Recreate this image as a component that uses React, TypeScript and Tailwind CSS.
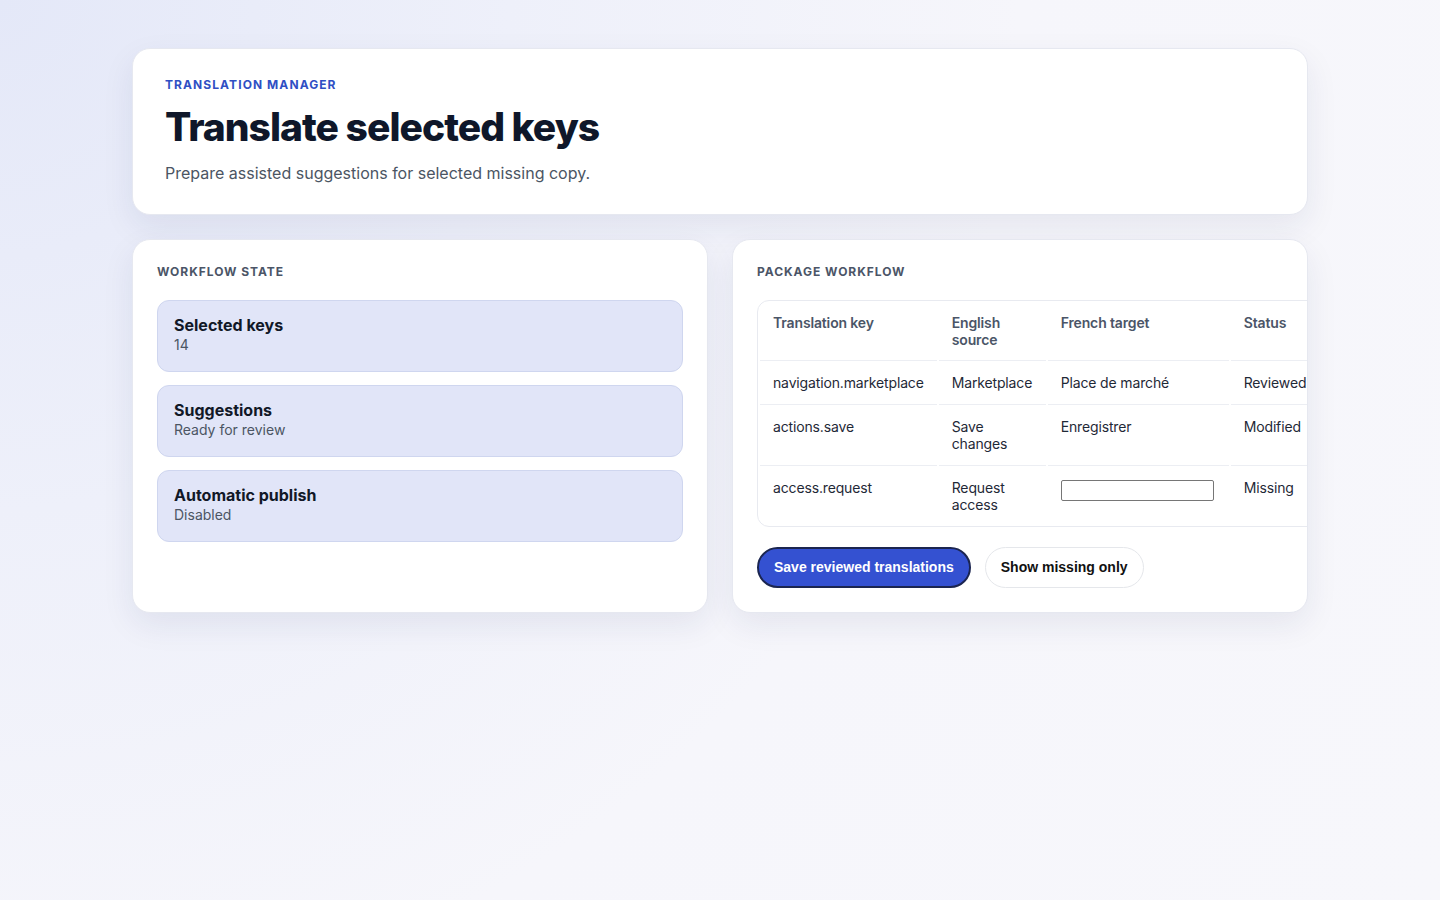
import React, { useState } from 'react';

type Row = {
  key: string;
  source: string;
  target: string | null;
  status: 'Reviewed' | 'Modified' | 'Missing';
};

const rows: Row[] = [
  { key: 'navigation.marketplace', source: 'Marketplace', target: 'Place de marché', status: 'Reviewed' },
  { key: 'actions.save', source: 'Save changes', target: 'Enregistrer', status: 'Modified' },
  { key: 'access.request', source: 'Request access', target: null, status: 'Missing' },
];

const states = [
  { title: 'Selected keys', value: '14' },
  { title: 'Suggestions', value: 'Ready for review' },
  { title: 'Automatic publish', value: 'Disabled' },
];

const cardClass =
  'rounded-[18px] border border-[#e6e8f0] bg-white shadow-[0_12px_32px_rgba(30,40,90,0.08)]';

export default function App() {
  const [missingOnly, setMissingOnly] = useState(false);
  const visible = missingOnly ? rows.filter((r) => r.status === 'Missing') : rows;

  return (
    <div className="min-h-screen bg-[radial-gradient(circle_at_0%_0%,#e4e8f8_0%,#eef0fa_30%,#f6f6fb_60%,#f7f7fb_100%)] font-['Inter','Noto_Sans',sans-serif] text-[#111827]">
      <div className="mx-auto w-[1176px] pt-12">
        {/* Header */}
        <header className={`${cardClass} px-8 pt-7 pb-[29px]`}>
          <p className="text-[12px] font-bold uppercase leading-4 tracking-[0.09em] text-[#2f4fc4]">
            Translation manager
          </p>
          <h1 className="mt-3 text-[39px] font-extrabold leading-[44px] tracking-[-0.025em] text-[#0f172a]">
            Translate selected keys
          </h1>
          <p className="mt-3 text-[16px] leading-6 text-[#4b5563]">
            Prepare assisted suggestions for selected missing copy.
          </p>
        </header>

        <div className="mt-6 grid grid-cols-2 gap-6">
          {/* Workflow state */}
          <section className={`${cardClass} p-6`}>
            <h2 className="text-[12px] font-bold uppercase leading-4 tracking-[0.08em] text-[#4b5567]">
              Workflow state
            </h2>
            <div className="mt-5 flex flex-col gap-[13px]">
              {states.map((s) => (
                <div
                  key={s.title}
                  className="rounded-xl border border-[#cfd6ef] bg-[#e1e5f8] px-4 pt-[14px] pb-4"
                >
                  <div className="text-[16px] font-bold leading-5 text-[#111827]">{s.title}</div>
                  <div className="text-[14px] leading-5 text-[#4b5563]">{s.value}</div>
                </div>
              ))}
            </div>
          </section>

          {/* Package workflow */}
          <section className={`${cardClass} overflow-hidden p-6`}>
            <h2 className="text-[12px] font-bold uppercase leading-4 tracking-[0.08em] text-[#4b5567]">
              Package workflow
            </h2>
            <div className="mt-5 w-max rounded-xl border border-[#e8eaf0]">
              <table className="border-separate border-spacing-x-[2px] border-spacing-y-0 text-left text-[14px] leading-[17px] tracking-[-0.15px]">
                <thead>
                  <tr className="align-top text-[#4b5567]">
                    <th className="w-[176px] border-b border-[#eceef3] px-[13px] pt-[13px] pb-[12px] font-semibold">Translation key</th>
                    <th className="w-[107px] border-b border-[#eceef3] px-[13px] pt-[13px] pb-[12px] font-semibold">English source</th>
                    <th className="w-[181px] border-b border-[#eceef3] px-[13px] pt-[13px] pb-[12px] font-semibold">French target</th>
                    <th className="w-[90px] border-b border-[#eceef3] px-[13px] pt-[13px] pb-[12px] font-semibold">Status</th>
                  </tr>
                </thead>
                <tbody>
                  {visible.map((r, i) => {
                    const last = i === visible.length - 1;
                    const td = `px-[13px] py-[13px] ${last ? '' : 'border-b border-[#eceef3]'}`;
                    return (
                      <tr key={r.key} className="align-top text-[#1f2937]">
                        <td className={td}>{r.key}</td>
                        <td className={td}>{r.source}</td>
                        <td className={td}>
                          {r.target ?? (
                            <input
                              aria-label={`French target for ${r.key}`}
                              className="mt-px block h-[21px] w-[153px] rounded-[2px] border border-[#767676] bg-white"
                            />
                          )}
                        </td>
                        <td className={`${td} whitespace-nowrap`}>{r.status}</td>
                      </tr>
                    );
                  })}
                </tbody>
              </table>
            </div>
            <div className="mt-5 flex items-center gap-[14px] font-['Liberation_Sans','Arial',sans-serif]">
              <button className="h-[41px] rounded-full border-2 border-[#1b2550] bg-[#3451d1] px-[15px] text-[14px] font-bold text-white">
                Save reviewed translations
              </button>
              <button
                onClick={() => setMissingOnly(!missingOnly)}
                className="h-[41px] rounded-full border border-[#e5e7eb] bg-white px-[15px] text-[14px] font-bold text-[#111111]"
              >
                Show missing only
              </button>
            </div>
          </section>
        </div>
      </div>
    </div>
  );
}
